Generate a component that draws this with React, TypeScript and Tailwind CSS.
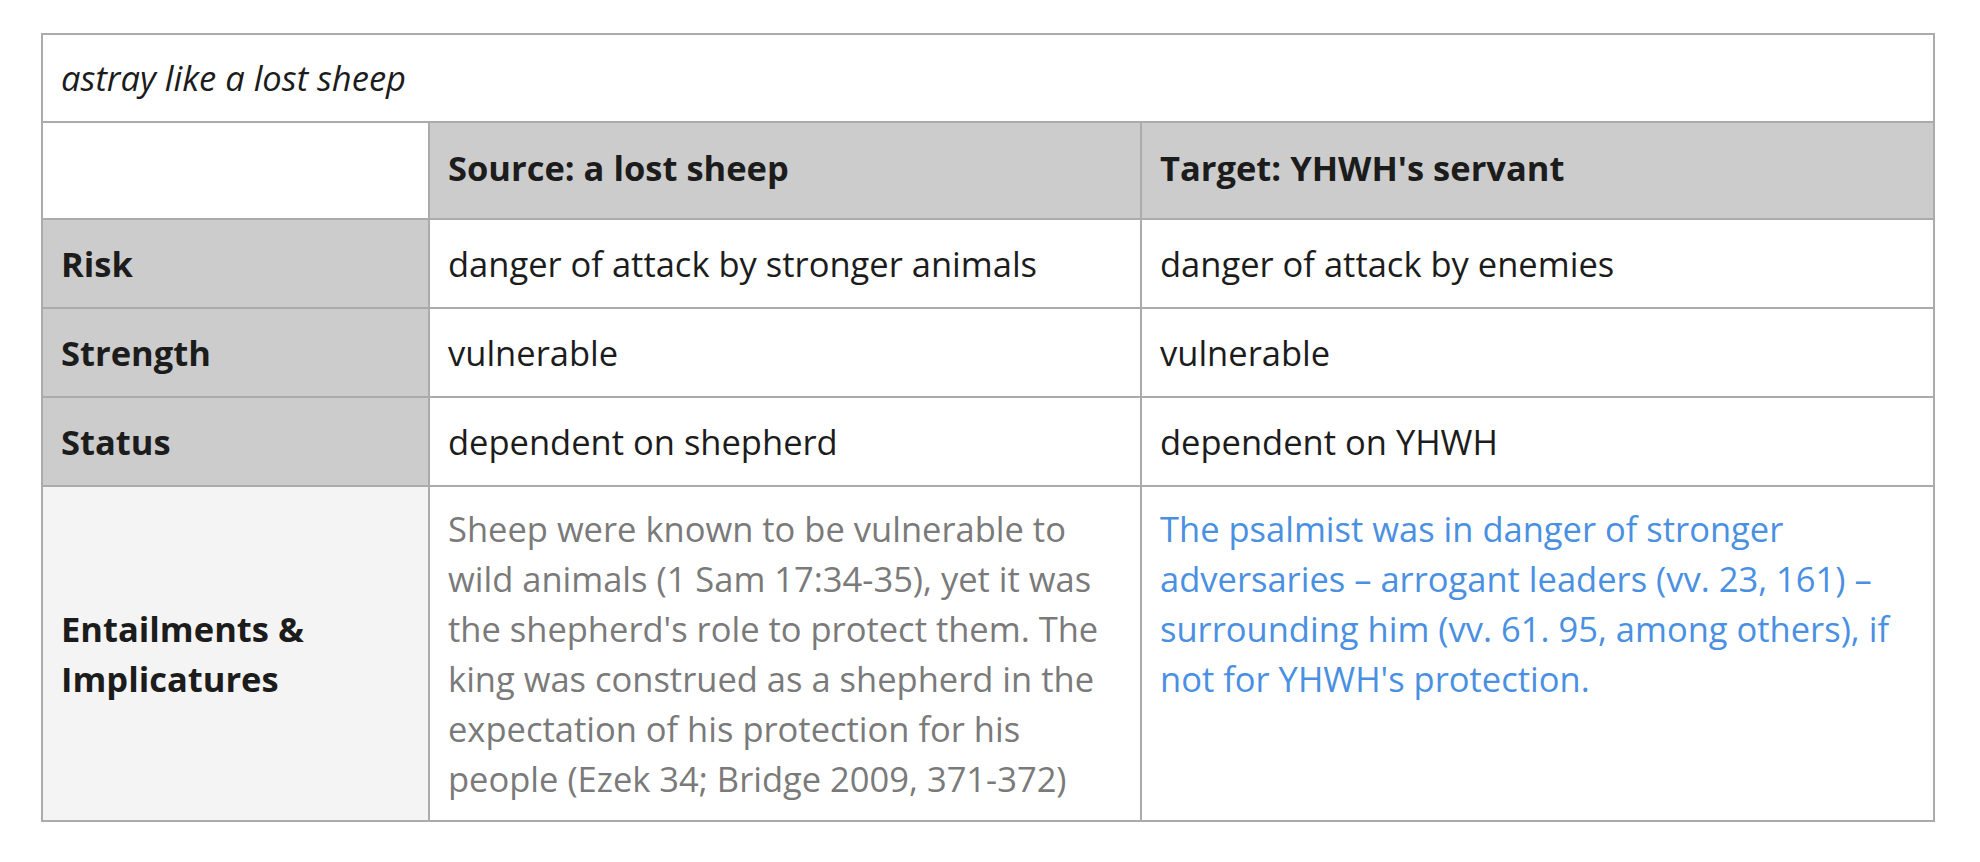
const rows = [
  { label: 'Risk', source: 'danger of attack by stronger animals', target: 'danger of attack by enemies' },
  { label: 'Strength', source: 'vulnerable', target: 'vulnerable' },
  { label: 'Status', source: 'dependent on shepherd', target: 'dependent on YHWH' },
]

export default function App() {
  return (
    <div className="min-h-screen bg-white pt-[33px] pl-[41px] font-['Open_Sans',sans-serif] text-[34.5px] leading-[50px] text-[#1c1c1c]">
      <table className="w-[1892px] table-fixed border-collapse border-2 border-[#ababab]">
        <colgroup>
          <col className="w-[387px]" />
          <col className="w-[712px]" />
          <col className="w-[793px]" />
        </colgroup>
        <caption className="h-[88px] border-2 border-b-0 border-[#ababab] px-[18px] text-left align-middle italic leading-[86px] caption-top">
          astray like a lost sheep
        </caption>
        <tbody>
          <tr className="h-[97px]">
            <td className="border-2 border-[#ababab] bg-white" />
            <th className="border-2 border-[#ababab] bg-[#cccccc] px-[18px] pb-[5px] text-left font-bold">Source: a lost sheep</th>
            <th className="border-2 border-[#ababab] bg-[#cccccc] px-[18px] pb-[5px] text-left font-bold">Target: YHWH's servant</th>
          </tr>
          {rows.map((r) => (
            <tr key={r.label} className="h-[89px]">
              <th className="border-2 border-[#ababab] bg-[#cccccc] px-[18px] text-left font-bold">{r.label}</th>
              <td className="border-2 border-[#ababab] px-[18px]">{r.source}</td>
              <td className="border-2 border-[#ababab] px-[18px]">{r.target}</td>
            </tr>
          ))}
          <tr className="h-[334px]">
            <th className="border-2 border-[#ababab] bg-[#f4f4f4] px-[18px] text-left align-middle font-bold">
              Entailments &amp; Implicatures
            </th>
            <td className="border-2 border-[#ababab] px-[18px] pt-[17px] pb-[16px] align-top text-[#7a7a7a]">
              Sheep were known to be vulnerable to wild animals (1 Sam 17:34-35), yet it was the shepherd's role to protect
              them. The king was construed as a shepherd in the expectation of his protection for his people (Ezek 34;
              Bridge 2009, 371-372)
            </td>
            <td className="border-2 border-[#ababab] px-[18px] pt-[17px] pb-[16px] align-top text-[#4a90e2]">
              The psalmist was in danger of stronger adversaries – arrogant leaders (vv. 23, 161) – surrounding him (vv.
              61. 95, among others), if not for YHWH's protection.
            </td>
          </tr>
        </tbody>
      </table>
    </div>
  )
}
